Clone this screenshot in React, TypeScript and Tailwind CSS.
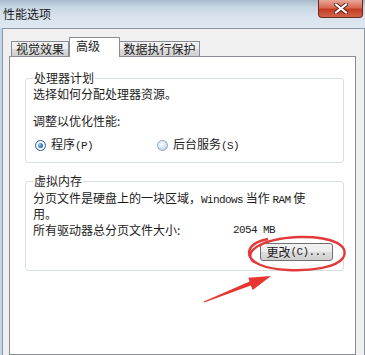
import React from 'react';

const mono = "font-['Liberation_Mono',monospace] text-[11px] tracking-[-0.6px]";

const Radio: React.FC<{ checked?: boolean; label: React.ReactNode }> = ({ checked, label }) => (
  <div className="flex items-center gap-[5px]">
    {checked ? (
      <div className="w-[11px] h-[11px] rounded-full border border-[#2c628b] bg-[radial-gradient(circle,#ffffff_40%,#d4e4f2_100%)] flex items-center justify-center">
        <div className="w-[5px] h-[5px] rounded-full bg-[radial-gradient(circle_at_35%_35%,#8fd0f5_0%,#1f5ea8_70%,#0d3870_100%)]" />
      </div>
    ) : (
      <div className="w-[11px] h-[11px] rounded-full border border-[#8fa8c2] bg-[radial-gradient(circle_at_40%_35%,#ffffff_0%,#cfe4f6_55%,#9fc3e6_100%)]" />
    )}
    <span>{label}</span>
  </div>
);

export default function App() {
  return (
    <div className="relative w-[365px] h-[355px] overflow-hidden flex flex-col bg-[#c2d5e8] font-['Noto_Sans_CJK_SC',sans-serif] text-[12px] leading-[14px] text-[#1c1c1c]">
      {/* Title bar */}
      <div className="h-[28px] shrink-0 flex justify-between bg-[linear-gradient(180deg,#a9b9ca_0%,#c8d5e3_25%,#d8e3ee_60%,#dfe8f2_100%)]">
        <div className="pl-[3px] pt-[7px] text-[12px] text-[#1a1a1a]">性能选项</div>
        <div className="w-[45px] h-[18px] mr-[2px] rounded-b-[4px] border border-t-0 border-[#6b2a20] bg-[linear-gradient(180deg,#e9a898_0%,#d76a52_45%,#c33b22_55%,#d2634a_100%)] flex items-center justify-center">
          <svg width="14" height="11" viewBox="0 0 14 11">
            <path d="M2 1.5 L12 9.5 M12 1.5 L2 9.5" stroke="#5a2018" strokeWidth="4" strokeLinecap="square" />
            <path d="M2 1.5 L12 9.5 M12 1.5 L2 9.5" stroke="#ffffff" strokeWidth="2.2" strokeLinecap="square" />
          </svg>
        </div>
      </div>

      {/* Window body */}
      <div className="flex-1 ml-[2px] border border-b-0 border-[#8d99a6] bg-[#f0f0f0] pl-[6px] pr-[8px] flex flex-col">
        {/* Tabs */}
        <div className="h-[27px] shrink-0 flex items-end pl-[2px]">
          <div className="h-[15px] w-[58px] border border-b-0 border-[#898c95] bg-[linear-gradient(180deg,#f3f3f3_0%,#ebebeb_50%,#dddddd_51%,#cfcfcf_100%)] flex items-center justify-center">
            视觉效果
          </div>
          <div className="relative z-10 h-[20px] w-[51px] -mb-[1px] border border-b-0 border-[#898c95] bg-white pl-[6px] pt-[1px]">
            高级
          </div>
          <div className="h-[15px] w-[80px] border border-b-0 border-l-0 border-[#898c95] bg-[linear-gradient(180deg,#f3f3f3_0%,#ebebeb_50%,#dddddd_51%,#cfcfcf_100%)] flex items-center justify-center">
            数据执行保护
          </div>
        </div>

        {/* Tab panel */}
        <div className="flex-1 border border-[#898c95] bg-white pl-[15px] pr-[11px] pt-[15px]">
          <fieldset className="border border-[#d5dfe5] rounded-[3px] pl-[7px] pb-[9px]">
            <legend className="px-[1px] leading-[12px]">处理器计划</legend>
            <div className="mt-[3px]">选择如何分配处理器资源。</div>
            <div className="mt-[13px]">调整以优化性能:</div>
            <div className="mt-[9px] flex pl-[2px]">
              <div className="w-[122px]">
                <Radio checked label={<>程序<span className={mono}>(P)</span></>} />
              </div>
              <Radio label={<>后台服务<span className={mono}>(S)</span></>} />
            </div>
          </fieldset>

          <fieldset className="mt-[12px] border border-[#d5dfe5] rounded-[3px] pl-[7px] pr-[10px] pb-[9px]">
            <legend className="px-[1px] leading-[12px]">虚拟内存</legend>
            <div className="mt-[4px] leading-[13px]">
              分页文件是硬盘上的一块区域，<span className={mono}>Windows</span> 当作 <span className={mono}>RAM</span> 使
              <br />
              用。
            </div>
            <div className="mt-[3px] flex">
              <span className="w-[200px]">所有驱动器总分页文件大小:</span>
              <span className={mono}>2054 MB</span>
            </div>
            <div className="mt-[6px] flex justify-end">
              <button className="w-[73px] h-[18px] rounded-[3px] border border-[#707070] bg-[linear-gradient(180deg,#f2f2f2_0%,#ebebeb_50%,#dddddd_51%,#cfcfcf_100%)] flex items-center justify-center leading-[14px]">
                更改<span className={mono}>(C)...</span>
              </button>
            </div>
          </fieldset>
        </div>
      </div>

      {/* Red annotation: ellipse and arrow */}
      <svg className="absolute left-0 top-0 pointer-events-none" width="365" height="355" viewBox="0 0 365 355">
        <path
          d="M254 262 C242 252 260 239 298 237 C334 236 350 246 343 258 C336 268 310 271 288 270 C266 269 248 263 249 252 C250 245 258 241 268 239"
          fill="none"
          stroke="#e23a3a"
          strokeWidth="2.4"
        />
        <polygon
          points="204.2,302.6 250.8,285.6 252.7,290 271,276 248.3,277.8 249.6,281.6 203.8,301.4"
          fill="#e8352f"
        />
      </svg>
    </div>
  );
}
